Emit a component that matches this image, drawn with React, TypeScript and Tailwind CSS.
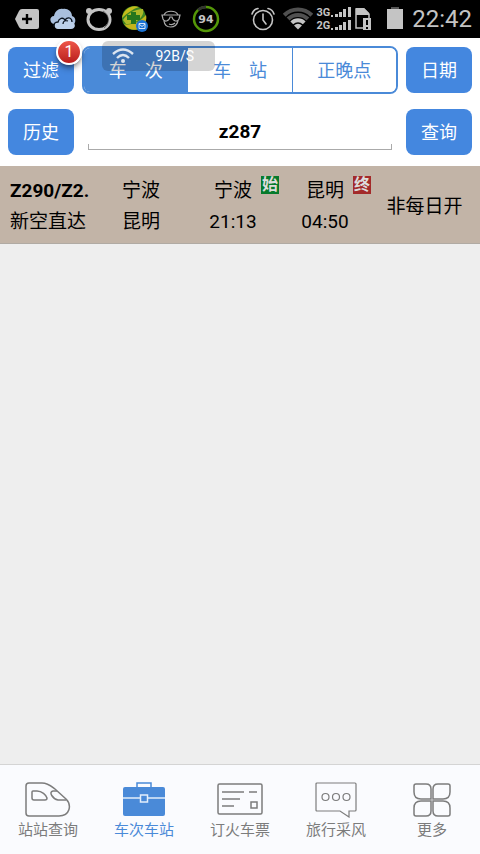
import { useState, type ReactNode } from "react";
import clsx from "clsx";

const modes = ["车　次", "车　站", "正晚点"];

const trains = [
  {
    code: "Z290/Z2.",
    type: "新空直达",
    from: "宁波",
    to: "昆明",
    depart: { station: "宁波", time: "21:13" },
    arrive: { station: "昆明", time: "04:50" },
    note: "非每日开",
  },
];

function StatusBar() {
  return (
    <div className="flex h-[38px] items-center justify-between bg-black pl-[15px] pr-2 text-[#c4c4c4]">
      <div className="flex items-center gap-[10px]">
        <svg width="24" height="22" viewBox="0 0 24 22" aria-hidden="true">
          <path d="M7 1H22Q24 1 24 3V19Q24 21 22 21H7Q5 21 4 19L0 11L4 3Q5 1 7 1Z" fill="currentColor" />
          <path d="M12 6V16M7 11H17" stroke="#000" strokeWidth="2.400" />
        </svg>
        <svg width="26" height="22" viewBox="0 0 26 22" className="ml-px" aria-hidden="true">
          <path
            d="M5 16C-1 16 -1 8 4 8C5 3 9 0 13 1C17 0 22 3 22 8C26 9 26 14 24 16L12 19Z"
            fill="#a9bfdd"
          />
          <path
            d="M8 21C4 21 3 15 8 14C9 10 13 10 15 12C17 9 22 10 22 14C26 15 26 21 21 21Z"
            fill="#bcd0ea"
          />
          <path
            d="M4 19C3 16 5 14 8 14C9 10 13 9 15 12C18 8 22 10 22 14M13 16C13 13 15 12 18 13"
            fill="none"
            stroke="#0b1420"
            strokeWidth="1.300"
          />
        </svg>
        <svg width="26" height="24" viewBox="0 0 26 24" aria-hidden="true">
          <circle cx="3" cy="4" r="3" fill="currentColor" />
          <circle cx="23" cy="4" r="3" fill="currentColor" />
          <ellipse cx="13" cy="12.500" rx="11" ry="10" fill="#000" stroke="currentColor" strokeWidth="3" />
          <path d="M17 4C24 8 24 17 18 21" fill="none" stroke="#444" strokeWidth="0.700" />
        </svg>
        <svg width="26" height="26" viewBox="0 0 26 26" aria-hidden="true">
          <circle cx="12" cy="12" r="12" fill="#3c8424" />
          <path d="M0 12C1 4 9 -2 17 1C11 3 5 7 0 12Z" fill="#c4bb1b" />
          <path d="M2 18C9 20 18 16 24 9A12 12 0 0 1 15 23.500A12 12 0 0 1 2 18Z" fill="#c4b41b" />
          <path d="M1 14C5 8 12 3 21 3C23 10 15 18 4 18Z" fill="#aeb828" />
          <path d="M9 6H14V9H18V14H14V18H9V14H5V9H9Z" fill="#26761d" />
          <circle cx="20" cy="20" r="6" fill="#1b72d2" />
          <path d="M17 17.500H23V22.500H17ZM17 18L20 20.500L23 18" fill="none" stroke="#d5e6fa" strokeWidth="1" />
        </svg>
        <svg
          width="20"
          height="20"
          viewBox="0 0 20 20"
          fill="none"
          stroke="#aaa"
          strokeWidth="1.200"
          className="ml-[3px]"
          aria-hidden="true"
        >
          <path d="M3 6C5 1 15 1 17 6M3 12C4 20 15 20 17 12" />
          <path d="M1 6H19L18 10C17 13 12 13 11 8H9C8 13 3 13 2 10Z" />
          <path d="M8 15C10 16 12 16 14 14" />
        </svg>
        <svg width="28" height="28" viewBox="0 0 28 28" className="ml-px" aria-hidden="true">
          <circle cx="14" cy="14" r="12" fill="none" stroke="#549708" strokeWidth="2.500" />
          <path d="M6 5A12 12 0 0 1 14 2" fill="none" stroke="#333" strokeWidth="2.500" />
          <text
            x="14"
            y="18"
            textAnchor="middle"
            fill="#c4c4c4"
            className="font-['DejaVu_Sans'] text-[11px] font-bold"
          >
            94
          </text>
        </svg>
      </div>

      <div className="flex items-center">
        <svg
          width="24"
          height="24"
          viewBox="0 0 24 24"
          fill="none"
          stroke="currentColor"
          strokeWidth="1.600"
          strokeLinecap="round"
          aria-hidden="true"
        >
          <circle cx="12" cy="13" r="9.500" />
          <path d="M12 7V13L15 17M1 7C2 4 4 2 7 1.500M17 1.500C20 2 22 4 23 7" />
        </svg>
        <svg width="30" height="24" viewBox="0 0 30 24" className="ml-2" fill="none" aria-hidden="true">
          <path
            d="M1.200 8.200A19.500 19.500 0 0 1 28.800 8.200M5.100 12.100A14 14 0 0 1 24.900 12.100"
            stroke="#505050"
            strokeWidth="4.200"
          />
          <path d="M8.800 15.800A8.800 8.800 0 0 1 21.200 15.800" stroke="currentColor" strokeWidth="4" />
          <path d="M11 18.500A5.500 5.500 0 0 1 19 18.500L15 22.500Z" fill="currentColor" />
        </svg>
        <div className="ml-[3px] font-[Roboto] text-[11px] leading-[13px] font-bold">
          <div>3G</div>
          <div>2G</div>
        </div>
        <svg width="20" height="24" viewBox="0 0 20 24" fill="currentColor" className="ml-px" aria-hidden="true">
          <path d="M0 8H2V10H0ZM4 7H7V10H4ZM8 5H11V10H8ZM12 2H15V10H12ZM17 0H20V10H17Z" />
          <path d="M0 21H2V23H0ZM4 20H7V23H4ZM8 18H11V23H8ZM12 15H15V23H12ZM17 13H20V23H17Z" />
        </svg>
        <svg width="17" height="24" viewBox="0 0 17 24" className="ml-1" aria-hidden="true">
          <path d="M1 2H9L14 7V21H1Z" fill="none" stroke="currentColor" strokeWidth="1.500" />
          <path d="M1 1H9L14 6V8H1Z" fill="currentColor" />
          <path d="M8 11H16V23H8Z" fill="currentColor" />
          <path d="M12 13V18M12 20V22" stroke="#000" strokeWidth="2" />
        </svg>
        <svg width="16" height="24" viewBox="0 0 16 24" className="ml-[15px]" aria-hidden="true">
          <path d="M4 0H12V3H4Z" fill="#555" />
          <path d="M0 2H16V22H0Z" fill="currentColor" />
        </svg>
        <span className="ml-[9px] font-[Roboto] text-2xl">22:42</span>
      </div>
    </div>
  );
}

function ActionButton({ children }: { children: ReactNode }) {
  return (
    <button
      type="button"
      className="h-[46px] w-[66px] shrink-0 rounded-lg bg-[#4487df] pt-[2px] text-lg text-white"
    >
      {children}
    </button>
  );
}

function Stop({ station, time, mark }: { station: string; time: string; mark: "始" | "终" }) {
  return (
    <div className="relative text-center">
      <div>{station}</div>
      <div>{time}</div>
      <span
        className={clsx(
          "absolute top-px right-0 h-[18px] w-[18px] text-base leading-[18px] font-bold text-[#ddd]",
          mark === "始" ? "bg-[#067a2c]" : "bg-[#a32a2a]",
        )}
      >
        {mark}
      </span>
    </div>
  );
}

const tabs = [
  {
    label: "站站查询",
    icon: (
      <svg width="46" height="36" viewBox="0 0 46 36" fill="none" stroke="currentColor" strokeWidth="1.500">
        <path d="M4 1H17C23 1 26 4 30 7L41 17C47 23 45 34 34 34H4Q1 34 1 31V4Q1 1 4 1Z" />
        <path d="M8 9H12C17 9 21 13 22 16Q22 18 20 18H9Q7 18 7 16V10Q7 9 8 9Z" />
        <path d="M32 9H28C23 10 28 17 33 18H41" />
      </svg>
    ),
  },
  {
    label: "车次车站",
    icon: (
      <svg width="44" height="36" viewBox="0 0 44 36" fill="none">
        <path d="M15 6V1H29V6" stroke="currentColor" strokeWidth="1.500" />
        <rect x="1" y="5" width="42" height="29" rx="2" fill="currentColor" />
        <path d="M1 16H43" stroke="#e3eefb" strokeWidth="1.300" />
        <rect x="18.500" y="13" width="7" height="7" fill="currentColor" stroke="#e3eefb" strokeWidth="1.500" />
      </svg>
    ),
  },
  {
    label: "订火车票",
    icon: (
      <svg width="46" height="36" viewBox="0 0 46 36" fill="none" stroke="currentColor" strokeWidth="1.500">
        <rect x="1" y="2" width="44" height="30" rx="1.500" />
        <path d="M5 10H27M32 10H40M5 17H23M5 24H17" />
        <rect x="34" y="20" width="6" height="6" />
      </svg>
    ),
  },
  {
    label: "旅行采风",
    icon: (
      <svg width="42" height="36" viewBox="0 0 42 36" fill="none" stroke="currentColor" strokeWidth="1.200">
        <path d="M2 1H40Q41 1 41 2V28Q41 29 40 29H34V35L25 29H2Q1 29 1 28V2Q1 1 2 1Z" />
        <circle cx="10.500" cy="15" r="3.500" />
        <circle cx="21" cy="15" r="3.500" />
        <circle cx="31.500" cy="15" r="3.500" />
      </svg>
    ),
  },
  {
    label: "更多",
    icon: (
      <svg width="38" height="36" viewBox="0 0 38 36" fill="none" stroke="currentColor" strokeWidth="1.500">
        <path d="M3 2H13Q18 2 18 7V17H8Q1 17 1 10V4Q1 2 3 2Z" />
        <path d="M35 2H25Q20 2 20 7V17H30Q37 17 37 10V4Q37 2 35 2Z" />
        <path d="M3 34H13Q18 34 18 29V19H8Q1 19 1 26V32Q1 34 3 34Z" />
        <path d="M35 34H25Q20 34 20 29V19H30Q37 19 37 26V32Q37 34 35 34Z" />
      </svg>
    ),
  },
];

export default function App() {
  const [mode, setMode] = useState(0);
  const [tab, setTab] = useState(1);
  const [query, setQuery] = useState("z287");

  return (
    <div className="relative flex min-h-screen flex-col bg-[#eeeeee] font-[Roboto,'Noto_Sans_CJK_SC',sans-serif] text-black">
      <StatusBar />

      {/* Floating network speed readout */}
      <div className="absolute top-[41px] left-[102px] z-10 flex h-[30px] w-[113px] items-center rounded-md bg-black/17 pr-[21px] pl-[10px] text-sm text-white">
        <svg
          width="22"
          height="16"
          viewBox="0 0 22 16"
          fill="none"
          stroke="#dce5f0"
          strokeWidth="2.400"
          aria-hidden="true"
        >
          <path d="M1 6Q11 -3 21 6M5 10Q11 4 17 10" />
          <circle cx="11" cy="13" r="2" fill="#dce5f0" stroke="none" />
        </svg>
        <span className="ml-auto">92B/S</span>
      </div>

      <header className="flex flex-col gap-[14px] bg-white px-2 pt-2 pb-[10px]">
        <div className="flex h-12 items-center gap-2">
          <div className="relative flex">
            <ActionButton>过滤</ActionButton>
            <span className="absolute -top-2 -right-2 flex h-[26px] w-[26px] items-center justify-center rounded-full border-2 border-white bg-linear-to-b from-[#ee5548] to-[#b91c1c] text-base text-white shadow-md shadow-black/40">
              1
            </span>
          </div>
          <div className="flex h-full flex-1 divide-x divide-[#4a8ad8] overflow-hidden rounded-lg border-2 border-[#4a8ad8]">
            {modes.map((label, i) => (
              <button
                key={label}
                type="button"
                aria-pressed={i === mode}
                onClick={() => setMode(i)}
                className={clsx(
                  "flex-1 pt-[2px] text-lg",
                  i === mode ? "bg-[#4a8ad8] text-white" : "bg-white text-[#4a8ad8]",
                )}
              >
                {label}
              </button>
            ))}
          </div>
          <ActionButton>日期</ActionButton>
        </div>

        <div className="flex h-12 items-center gap-[14px]">
          <ActionButton>历史</ActionButton>
          <div className="relative h-9 min-w-0 flex-1">
            <input
              type="text"
              aria-label="车次"
              value={query}
              onChange={(e) => setQuery(e.target.value)}
              className="h-full w-full border-b border-[#aaa] bg-transparent text-center text-[19px] font-bold outline-none"
            />
            <span className="pointer-events-none absolute inset-x-0 bottom-0 h-[6px] border-x border-[#aaa]" />
          </div>
          <ActionButton>查询</ActionButton>
        </div>
      </header>

      <main className="flex-1">
        <ul>
          {trains.map((t) => (
            <li
              key={t.code}
              className="grid grid-cols-[95fr_92fr_92fr_92fr_109fr] border-b border-[#b0aaa3] bg-[#c2b4a7] pt-[9px] pb-[6px] text-[19px] leading-[31px]"
            >
              <div className="pl-[10px] whitespace-nowrap">
                <div className="font-bold">{t.code}</div>
                <div>{t.type}</div>
              </div>
              <div className="text-center">
                <div>{t.from}</div>
                <div>{t.to}</div>
              </div>
              <Stop {...t.depart} mark="始" />
              <Stop {...t.arrive} mark="终" />
              <div className="self-center pr-[2px] text-center">{t.note}</div>
            </li>
          ))}
        </ul>
      </main>

      <nav className="flex h-[90px] border-t border-[#d4d4d4] bg-[#fafbfe]">
        {tabs.map((item, i) => (
          <button
            key={item.label}
            type="button"
            onClick={() => setTab(i)}
            className={clsx(
              "flex flex-1 flex-col items-center pt-[17px] text-[15px] leading-6",
              i === tab ? "text-[#4a8ad8]" : "text-[#7c7c7c]",
            )}
          >
            {item.icon}
            <span>{item.label}</span>
          </button>
        ))}
      </nav>
    </div>
  );
}
